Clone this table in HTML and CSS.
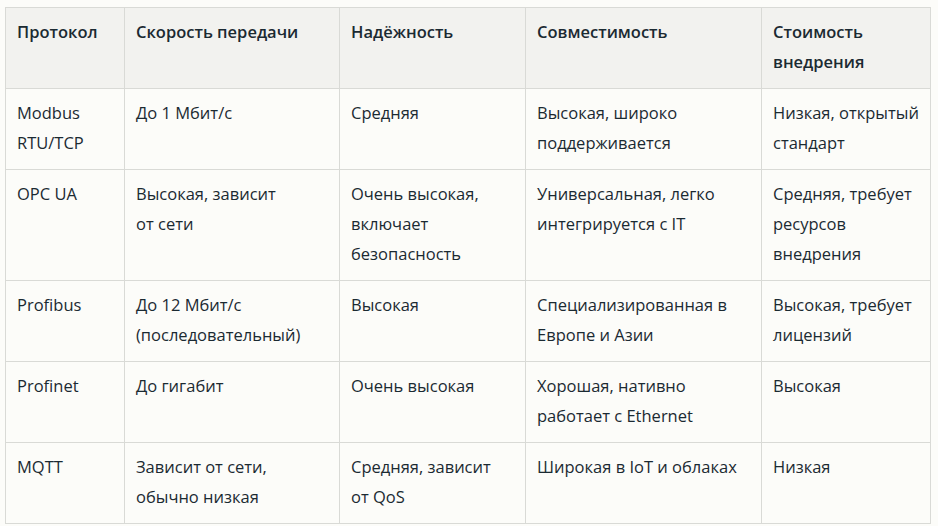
FILE: index.html
```html
<!DOCTYPE html>
<html lang="ru">
<head>
<meta charset="utf-8">
<link rel="stylesheet" href="styles.css">
</head>
<body>
<div class="wrap">
<table class="cmp">
<colgroup>
<col class="c1"><col class="c2"><col class="c3"><col class="c4"><col class="c5">
</colgroup>
<thead>
<tr><th>Протокол</th><th>Скорость передачи</th><th>Надёжность</th><th>Совместимость</th><th>Стоимость внедрения</th></tr>
</thead>
<tbody>
<tr><td>Modbus RTU/TCP</td><td>До 1 Мбит/с</td><td>Средняя</td><td>Высокая, широко поддерживается</td><td>Низкая, открытый стандарт</td></tr>
<tr><td>OPC UA</td><td>Высокая, зависит от&nbsp;сети</td><td>Очень высокая, включает безопасность</td><td>Универсальная, легко интегрируется с IT</td><td>Средняя, требует ресурсов внедрения</td></tr>
<tr><td>Profibus</td><td>До 12 Мбит/с (последовательный)</td><td>Высокая</td><td>Специализированная в Европе и Азии</td><td>Высокая, требует лицензий</td></tr>
<tr><td>Profinet</td><td>До гигабит</td><td>Очень высокая</td><td>Хорошая, нативно работает с Ethernet</td><td>Высокая</td></tr>
<tr><td>MQTT</td><td>Зависит от сети, обычно низкая</td><td>Средняя, зависит от&nbsp;QoS</td><td>Широкая в IoT и облаках</td><td>Низкая</td></tr>
</tbody>
</table>
</div>
</body>
</html>
```
FILE: styles.css
```css
html, body {
  margin: 0;
  padding: 0;
  background: #fcfcf9;
}
.wrap {
  padding: 7px 0 0 5px;
}
.cmp {
  border-collapse: collapse;
  table-layout: fixed;
  width: 925px;
  font-family: "Open Sans", "Noto Sans", sans-serif;
  font-size: 16.5px;
  line-height: 30px;
  color: #1b2a32;
}
.c1 { width: 119px; }
.c2 { width: 215px; }
.c3 { width: 186px; }
.c4 { width: 236px; }
.c5 { width: 169px; }
.cmp th, .cmp td {
  border: 1px solid #d9dad6;
  padding: 9px 11px 11px;
  text-align: left;
  vertical-align: top;
}
.cmp th {
  background: #f2f2ef;
  font-weight: 600;
}
.cmp td {
  background: #fcfcf9;
  font-weight: 400;
}
```
